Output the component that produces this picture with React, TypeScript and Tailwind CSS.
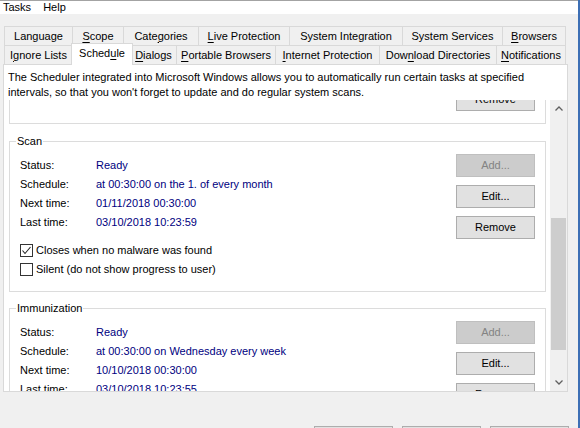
import React from 'react';

type Tab = { label: string; hot?: number; w: string };

const topRow: Tab[] = [
  { label: 'Language', w: 'w-[69px]' },
  { label: 'Scope', hot: 0, w: 'w-[51px]' },
  { label: 'Categories', hot: 4, w: 'w-[75px]' },
  { label: 'Live Protection', hot: 0, w: 'w-[91px]' },
  { label: 'System Integration', w: 'w-[113px]' },
  { label: 'System Services', w: 'w-[100px]' },
  { label: 'Browsers', hot: 0, w: 'w-[63px]' },
];

const frontRow: Tab[] = [
  { label: 'Ignore Lists', hot: 1, w: 'w-[69px]' },
  { label: 'Schedule', hot: 5, w: 'w-[58px]' },
  { label: 'Dialogs', hot: 0, w: 'w-[46px]' },
  { label: 'Portable Browsers', hot: 0, w: 'w-[99px]' },
  { label: 'Internet Protection', hot: 0, w: 'w-[104px]' },
  { label: 'Download Directories', hot: 3, w: 'w-[117px]' },
  { label: 'Notifications', hot: 0, w: 'w-[69px]' },
];

// access key gets underlined, like the win32 tab control does
function Label({ text, hot }: { text: string; hot?: number }) {
  if (hot === undefined) return <span>{text}</span>;
  return (
    <span>
      {text.slice(0, hot)}
      <span className="underline underline-offset-[2px]">{text[hot]}</span>
      {text.slice(hot + 1)}
    </span>
  );
}

function TabRow({ tabs, selected }: { tabs: Tab[]; selected?: string }) {
  return (
    <div className="flex h-[19px]">
      {tabs.map((t, i) =>
        t.label === selected ? (
          <div
            key={t.label}
            className="relative z-10 -mx-[2px] -mt-[2px] flex h-[22px] w-[62px] shrink-0 items-start justify-center border-x border-t border-[#d9d9d9] bg-white leading-[18px]"
          >
            <Label text={t.label} hot={t.hot} />
          </div>
        ) : (
          <div
            key={t.label}
            className={`flex shrink-0 items-center justify-center border-t border-r border-[#d9d9d9] ${t.w} ${i === 0 ? 'border-l' : ''}`}
          >
            <Label text={t.label} hot={t.hot} />
          </div>
        )
      )}
    </div>
  );
}

function Btn({ children, disabled }: { children: React.ReactNode; disabled?: boolean }) {
  return (
    <button
      className={
        disabled
          ? 'h-[23px] w-[79px] shrink-0 border border-[#bfbfbf] bg-[#cccccc] text-[#838383]'
          : 'h-[23px] w-[79px] shrink-0 border border-[#adadad] bg-[#e1e1e1] text-black'
      }
    >
      {children}
    </button>
  );
}

function Check({ checked, label }: { checked?: boolean; label: string }) {
  return (
    <div className="flex h-[19px] items-center gap-[3px]">
      <span className="flex h-[13px] w-[13px] items-center justify-center border border-[#333333] bg-white">
        {checked && (
          <svg width="11" height="11" viewBox="0 0 11 11">
            <polyline points="1.5,5.5 4,8.5 9.5,2" fill="none" stroke="#222222" strokeWidth="1.1" />
          </svg>
        )}
      </span>
      <span>{label}</span>
    </div>
  );
}

type Info = [string, string];

function TaskGroup({
  title,
  rows,
  checks,
  className,
}: {
  title: string;
  rows: Info[];
  checks?: { label: string; checked?: boolean }[];
  className: string;
}) {
  return (
    <fieldset className={`ml-[5px] mr-[4px] border border-[#dcdcdc] px-[10px] pb-[12px] ${className}`}>
      <legend className="-ml-[4px] px-[1px] leading-[14px]">{title}</legend>
      <div className="flex">
        <div className="flex-1 pt-[8px]">
          {rows.map(([k, v]) => (
            <div key={k} className="flex h-[19px] items-center">
              <span className="w-[76px] shrink-0">{k}</span>
              <span className="text-[#000080]">{v}</span>
            </div>
          ))}
          {checks && (
            <div className="mt-[9px]">
              {checks.map((c) => (
                <Check key={c.label} label={c.label} checked={c.checked} />
              ))}
            </div>
          )}
        </div>
        <div className="flex flex-col gap-[8px] pt-[6px]">
          <Btn disabled>Add...</Btn>
          <Btn>Edit...</Btn>
          <Btn>Remove</Btn>
        </div>
      </div>
    </fieldset>
  );
}

function Chevron({ down }: { down?: boolean }) {
  return (
    <svg width="8" height="5" viewBox="0 0 8 5" className={down ? 'rotate-180' : ''}>
      <polyline points="0.5,4.5 4,1 7.5,4.5" fill="none" stroke="#606060" strokeWidth="1.3" />
    </svg>
  );
}

export default function App() {
  return (
    <div className="h-[428px] w-[580px] overflow-hidden border-r-2 border-[#3d6fb5] bg-[#f0f0f0] font-['Liberation_Sans',Arial,sans-serif] text-[11px] text-black">
      {/* menu bar */}
      <div className="flex h-[14px] gap-[12px] border-t border-[#a3a3a3] bg-white pl-[3px] leading-[12px]">
        <span>Tasks</span>
        <span>Help</span>
      </div>

      {/* tab strip, two rows */}
      <div className="ml-[4px] mt-[12px] w-[562px]">
        <TabRow tabs={topRow} />
        <TabRow tabs={frontRow} selected="Schedule" />
      </div>

      {/* page */}
      <div className="ml-[3px] flex h-[328px] w-[565px] flex-col border border-[#d9d9d9] bg-white">
        <p className="w-[545px] px-[4px] pt-[5px] leading-[15px]">
          The Scheduler integrated into Microsoft Windows allows you to automatically run certain tasks at specified
          intervals, so that you won't forget to update and do regular system scans.
        </p>

        <div className="flex h-[291px]">
          <div className="flex-1 overflow-hidden">
            {/* bottom of the group above, scrolled out of view */}
            <div className="ml-[5px] mr-[4px] flex h-[24px] justify-end border-x border-b border-[#dcdcdc] pr-[10px]">
              <div className="-mt-[12px]">
                <Btn>Remove</Btn>
              </div>
            </div>

            <TaskGroup
              title="Scan"
              className="mt-[10px]"
              rows={[
                ['Status:', 'Ready'],
                ['Schedule:', 'at 00:30:00 on the 1. of every month'],
                ['Next time:', '01/11/2018 00:30:00'],
                ['Last time:', '03/10/2018 10:23:59'],
              ]}
              checks={[
                { label: 'Closes when no malware was found', checked: true },
                { label: 'Silent (do not show progress to user)' },
              ]}
            />

            <TaskGroup
              title="Immunization"
              className="mt-[9px]"
              rows={[
                ['Status:', 'Ready'],
                ['Schedule:', 'at 00:30:00 on Wednesday every week'],
                ['Next time:', '10/10/2018 00:30:00'],
                ['Last time:', '03/10/2018 10:23:55'],
              ]}
            />
          </div>

          {/* scrollbar */}
          <div className="flex w-[17px] shrink-0 flex-col bg-[#f0f0f0]">
            <div className="flex h-[17px] items-center justify-center">
              <Chevron />
            </div>
            <div className="flex-1">
              <div className="mx-[1px] mt-[101px] h-[132px] bg-[#cdcdcd]" />
            </div>
            <div className="flex h-[17px] items-center justify-center">
              <Chevron down />
            </div>
          </div>
        </div>
      </div>

      {/* dialog buttons, mostly below the crop */}
      <div className="mt-[34px] flex justify-end gap-[9px] pr-[9px]">
        <Btn>OK</Btn>
        <Btn>Cancel</Btn>
        <Btn>Apply</Btn>
      </div>
    </div>
  );
}
